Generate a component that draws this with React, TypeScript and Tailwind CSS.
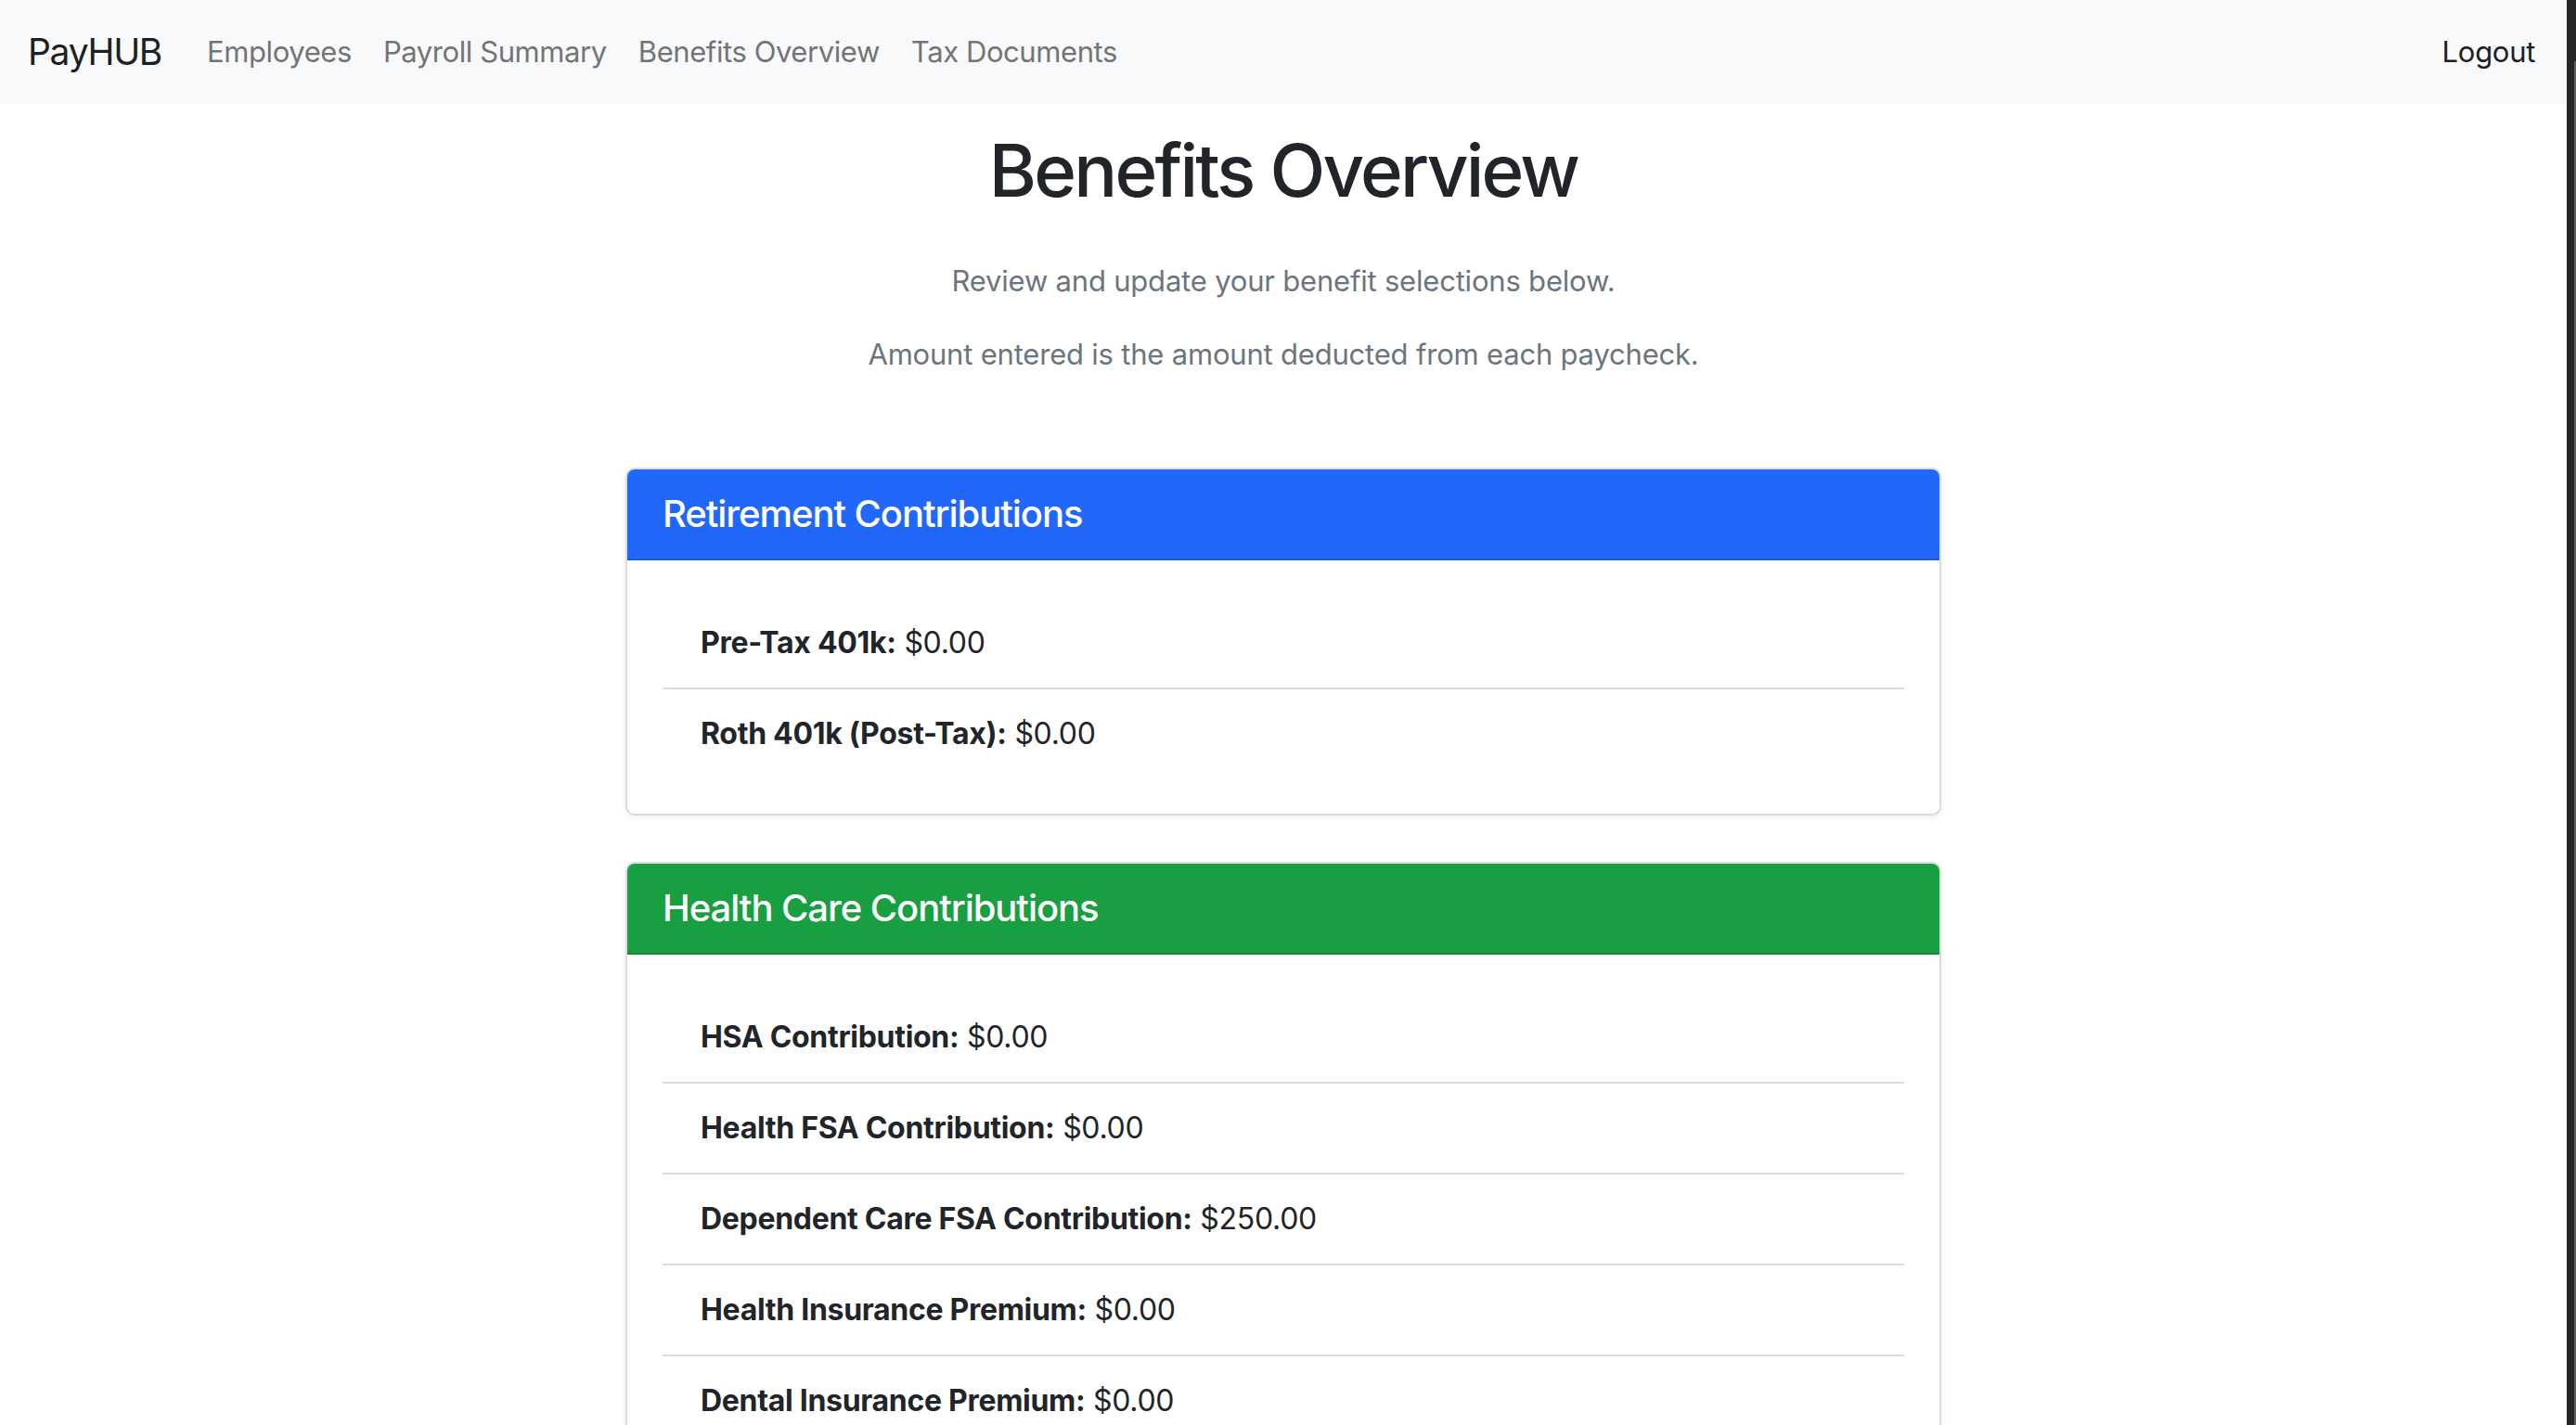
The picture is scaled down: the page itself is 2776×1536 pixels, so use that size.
const navLinks = ["Employees", "Payroll Summary", "Benefits Overview", "Tax Documents"];

type Line = { label: string; amount: string };

const sections: { title: string; color: string; items: Line[] }[] = [
  {
    title: "Retirement Contributions",
    color: "bg-[#2168fa] border-b-[#1d5ad8]",
    items: [
      { label: "Pre-Tax 401k:", amount: "$0.00" },
      { label: "Roth 401k (Post-Tax):", amount: "$0.00" },
    ],
  },
  {
    title: "Health Care Contributions",
    color: "bg-[#179f41] border-b-[#148a38]",
    items: [
      { label: "HSA Contribution:", amount: "$0.00" },
      { label: "Health FSA Contribution:", amount: "$0.00" },
      { label: "Dependent Care FSA Contribution:", amount: "$250.00" },
      { label: "Health Insurance Premium:", amount: "$0.00" },
      { label: "Dental Insurance Premium:", amount: "$0.00" },
      { label: "Vision Insurance Premium:", amount: "$0.00" },
    ],
  },
];

const App = () => {
  return (
    <div className="flex h-screen w-full overflow-hidden bg-white font-['Inter','Liberation_Sans',sans-serif] text-[#212529]">
      <div className="flex-1 overflow-hidden">
        {/* Navbar */}
        <nav className="flex h-[112px] items-center bg-[#f8f9fa] pl-[30px] pr-[34px]">
          <a className="mr-[49px] text-[39px] tracking-[-1.3px] text-[#1c1f23]">PayHUB</a>
          <div className="flex gap-[34px]">
            {navLinks.map((link) => (
              <a key={link} className="text-[31px] tracking-[-0.42px] text-[#737476]">
                {link}
              </a>
            ))}
          </div>
          <a className="ml-auto text-[31px] tracking-[-0.3px] text-[#1c1f23]">Logout</a>
        </nav>

        {/* Page header */}
        <div className="pt-[24px] text-center">
          <h1 className="text-[78px] font-medium leading-[96px] tracking-[-2.8px]">Benefits Overview</h1>
          <p className="mt-[50px] text-[31px] leading-[42px] tracking-[-0.2px] text-[#6c757d]">
            Review and update your benefit selections below.
          </p>
          <p className="mt-[37px] text-[31px] leading-[42px] tracking-[-0.2px] text-[#6c757d]">
            Amount entered is the amount deducted from each paycheck.
          </p>
        </div>

        {/* Cards */}
        <div className="mx-auto mt-[101px] flex w-[1418px] flex-col gap-[50px]">
          {sections.map((section) => (
            <div
              key={section.title}
              className="overflow-hidden rounded-[10px] border-2 border-[#dcdcdc] shadow-[0_2px_6px_rgba(0,0,0,0.08)]"
            >
              <div className={`border-b-2 px-[38px] py-[24px] ${section.color}`}>
                <h5 className="text-[40px] font-medium leading-[48px] tracking-[-1.05px] text-white">
                  {section.title}
                </h5>
              </div>
              <div className="px-[38px] pb-[38px] pt-[41px]">
                {section.items.map((item, i) => (
                  <div
                    key={item.label}
                    className={`px-[41px] py-[24px] text-[32px] leading-[48px] tracking-[-0.3px] ${
                      i < section.items.length - 1 ? "border-b-2 border-[#dcdcdc]" : ""
                    }`}
                  >
                    <span className="font-bold">{item.label}</span> {item.amount}
                  </div>
                ))}
              </div>
            </div>
          ))}
        </div>
      </div>

      {/* window edge */}
      <div className="flex w-[10px] shrink-0 justify-end bg-[#262626]">
        <div className="mt-[66px] w-[2px] bg-[#5c5c5c]" />
      </div>
    </div>
  );
};

export default App;
